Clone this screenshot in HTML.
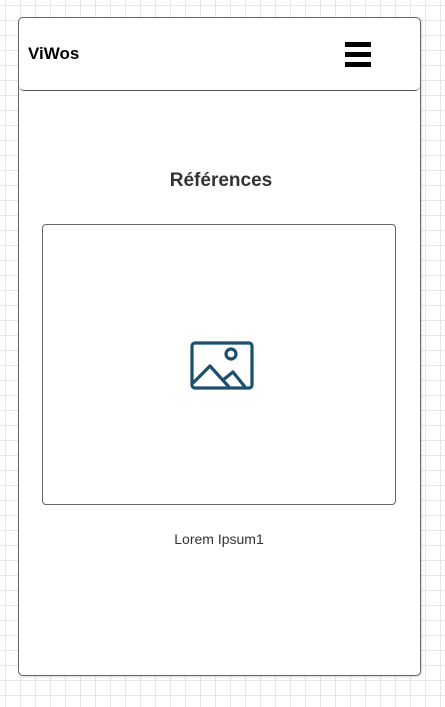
<!DOCTYPE html>
<html><head><style>
body{margin:0;width:445px;height:707px;overflow:hidden;font-family:"Liberation Sans",sans-serif;
background-color:#fff;
background-image:linear-gradient(#e6e6e6 1px,transparent 1px),linear-gradient(90deg,#e6e6e6 1px,transparent 1px);
background-size:15px 15px;background-position:5px 5px;position:relative}
.frame{position:absolute;left:18px;top:17px;width:401px;height:657px;border:1px solid #666;border-radius:5px;background:#fff;box-shadow:1px 1px 2px rgba(0,0,0,.15)}
.hdr{position:absolute;left:0;top:0;width:401px;height:72px;border-bottom:1px solid #555;border-radius:5px}
.logo{position:absolute;left:9px;top:26px;font-weight:bold;font-size:17px;color:#000}
.bar{position:absolute;left:326px;width:26px;height:5px;background:#000}
.title{position:absolute;left:2px;width:400px;top:152px;text-align:center;font-weight:bold;font-size:19px;color:#333}
.card{position:absolute;left:23px;top:206px;width:352px;height:279px;border:1px solid #666;border-radius:4px}
.cap{position:absolute;left:0px;width:400px;top:513px;text-align:center;font-size:14px;color:#333}
</style></head><body>
<div class="frame">
<div class="hdr"><div class="logo">ViWos</div>
<div class="bar" style="top:24px"></div><div class="bar" style="top:34px"></div><div class="bar" style="top:44px"></div></div>
<div class="title">Références</div>
<div class="card">
<svg style="position:absolute;left:147px;top:116px" width="64" height="50" viewBox="0 0 64 50" fill="none" stroke="#1b4f6e" stroke-width="3.2" stroke-linejoin="round">
<rect x="2" y="2" width="60" height="45" rx="3"/>
<circle cx="41" cy="13" r="5"/>
<path d="M3 42 L20 25 L39 46 M33 39 L43 31 L55 46"/>
</svg>
</div>
<div class="cap">Lorem Ipsum1</div>
</div>
</body></html>
